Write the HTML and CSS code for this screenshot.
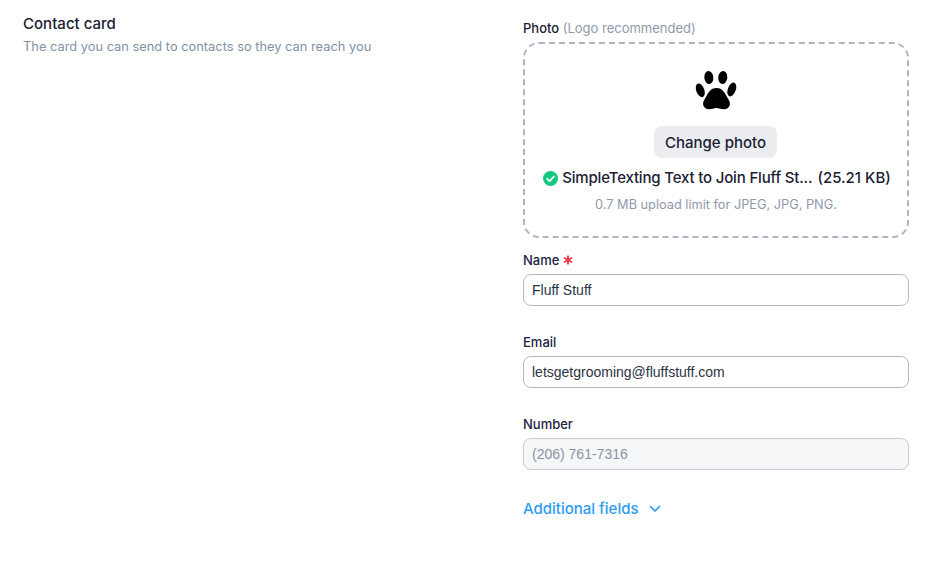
FILE: index.html
```html
<!DOCTYPE html>
<html lang="en">
<head>
<meta charset="utf-8">
<title>Contact card</title>
<link rel="stylesheet" href="styles.css">
</head>
<body>
<main class="page">
  <section class="intro">
    <h2 class="intro-title">Contact card</h2>
    <p class="intro-text">The card you can send to contacts so they can reach you</p>
  </section>
  <form class="form">
    <div class="photo-label">Photo <span class="muted">(Logo recommended)</span></div>
    <div class="dropzone">
      <svg class="paw" viewBox="0 0 42 40" width="42" height="40" aria-hidden="true">
        <ellipse cx="13.8" cy="7.5" rx="4.5" ry="6.6" transform="rotate(-6 13.8 7.5)"/>
        <ellipse cx="27.8" cy="7.5" rx="4.5" ry="6.6" transform="rotate(6 27.8 7.5)"/>
        <ellipse cx="5.3" cy="20.3" rx="4" ry="7.2" transform="rotate(-20 5.3 20.3)"/>
        <ellipse cx="36.8" cy="19.5" rx="4" ry="7.2" transform="rotate(20 36.8 19.5)"/>
        <path d="M21.5 18c5 0 7.5 3.5 10 8 2 3.6 3.8 5.6 3.4 8.5-.5 3.2-3 4.8-6 4.8-2.8 0-4.8-1.3-7.4-1.3s-4.6 1.3-7.4 1.3c-3 0-5.5-1.6-6-4.8-.4-2.9 1.4-4.9 3.4-8.5 2.5-4.5 5-8 10-8z"/>
      </svg>
      <button class="change-btn" type="button">Change photo</button>
      <div class="file-row">
        <svg class="check" viewBox="0 0 16 16" width="15" height="15" aria-hidden="true">
          <circle cx="8" cy="8" r="8" fill="#12c97f"/>
          <path d="M4.4 8.3l2.5 2.4 4.7-4.8" fill="none" stroke="#fff" stroke-width="1.9" stroke-linecap="round" stroke-linejoin="round"/>
        </svg>
        <span class="file-name">SimpleTexting Text to Join Fluff St...</span>
        <span class="file-size">(25.21 KB)</span>
      </div>
      <div class="limit">0.7 MB upload limit for JPEG, JPG, PNG.</div>
    </div>

    <div class="field field-name">
      <label class="label" for="name">Name <svg class="req" viewBox="0 0 10 10" width="10" height="10" aria-hidden="true"><path d="M5 .4v9.2M1 2.7l8 4.6M9 2.7L1 7.3" stroke="#f0384f" stroke-width="1.9" fill="none"/></svg></label>
      <input class="input" id="name" type="text" value="Fluff Stuff">
    </div>
    <div class="field">
      <label class="label" for="email">Email</label>
      <input class="input" id="email" type="text" value="letsgetgrooming@fluffstuff.com">
    </div>
    <div class="field">
      <label class="label" for="number">Number</label>
      <input class="input" id="number" type="text" placeholder="(206) 761-7316" disabled>
    </div>
    <button class="more" type="button">Additional fields
      <svg viewBox="0 0 12 8" width="12" height="8" aria-hidden="true"><path d="M1.5 1.5L6 6l4.5-4.5" fill="none" stroke="#2d9cf0" stroke-width="1.7" stroke-linecap="round" stroke-linejoin="round"/></svg>
    </button>
  </form>
</main>
</body>
</html>
```

FILE: styles.css
```css
* { box-sizing: border-box; }
html, body { margin: 0; background: #fff; }
body { font-family: Inter, "Liberation Sans", sans-serif; color: #1b2133; }
.page { display: flex; width: 938px; height: 561px; padding: 15px 29px 0 23px; overflow: hidden; }
.intro { width: 500px; flex: none; }
.intro-title { margin: 0; font-size: 15px; line-height: 18px; font-weight: 450; letter-spacing: .02px; }
.intro-text { margin: 6px 0 0; font-size: 12.85px; line-height: 16px; color: #8392a6; }
.form { width: 386px; flex: none; }
.photo-label { margin-top: 5px; font-size: 13px; line-height: 16px; height: 22px; font-weight: 450; }
.muted { color: #8f99ab; font-weight: 400; }
.dropzone { flex: none; height: 196px; border: 2px dashed #aeb4c4; border-radius: 16px; display: flex; flex-direction: column; align-items: center; padding-top: 26px; }
.paw { display: block; fill: #000; }
.change-btn { margin: 16px 1px 0 0; width: 123px; height: 32px; border: 0; border-radius: 8px; background: #ecedf1; color: #1b2133; font: 450 15px/18px Inter, "Liberation Sans", sans-serif; padding: 2px 0 0; }
.file-row { display: flex; align-items: center; margin: 11px 0 0 2px; height: 18px; font-size: 15px; line-height: 18px; font-weight: 450; white-space: nowrap; }
.check { margin-right: 4px; flex: none; }
.file-name { letter-spacing: -.17px; }
.file-size { margin-left: 5px; }
.limit { margin-top: 10px; font-size: 12.75px; line-height: 16px; color: #8f99ab; }
.field { margin-top: 28px; }
.field-name { margin-top: 14px; }
.label { display: block; font-size: 13px; line-height: 16px; font-weight: 450; height: 22px; color: #1b2343; }
.req { margin-left: 0; vertical-align: 0; }
.input { display: block; width: 100%; height: 32px; border: 1px solid #b2b9c9; border-radius: 8px; padding: 0 8px; font: 14px "Liberation Sans", Arial, sans-serif; color: #2b3444; background: #fff; outline: 0; }
.input:disabled { background: #f5f6f8; border-color: #c6cbd6; }
.input::placeholder { color: #8a93a3; opacity: 1; }
.more { display: flex; align-items: center; gap: 10px; margin-top: 30px; padding: 0; border: 0; background: none; color: #2d9cf0; font: 500 15px/18px Inter, "Liberation Sans", sans-serif; }
```
